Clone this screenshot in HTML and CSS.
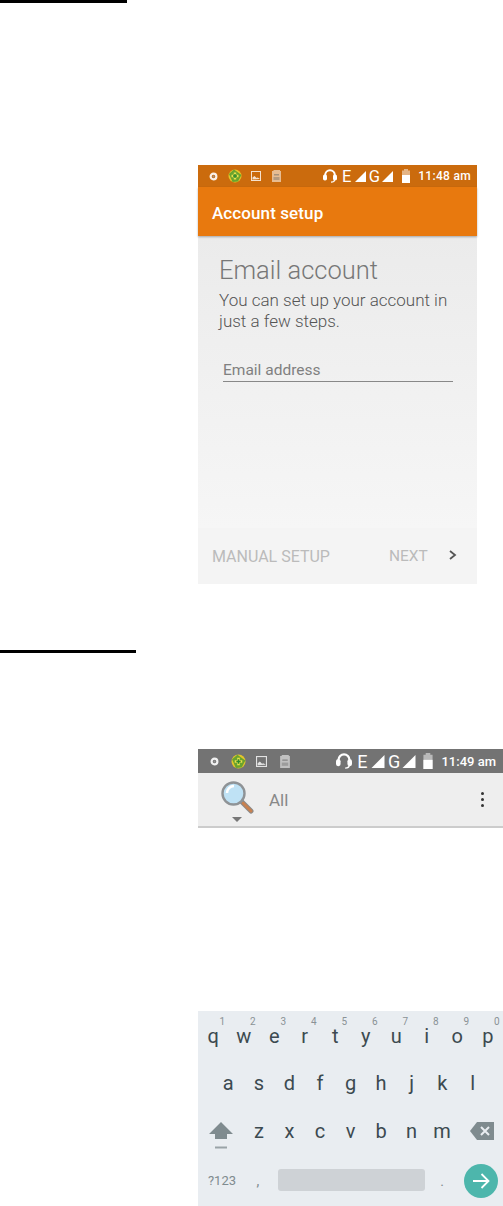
FILE: index.html
```html
<!DOCTYPE html>
<html lang="en">
<head>
  <meta charset="UTF-8"><title>Email setup</title>
  <meta name="viewport" content="width=device-width,initial-scale=1">
  <link rel="stylesheet" href="styles.css">
</head>
<body>

  <!-- shared status bar icons -->
  <svg class="defs" width="0" height="0">
    <symbol id="i-dot" viewBox="0 0 10 10"><circle cx="5" cy="5" r="3.2" fill="none" stroke="#fff" stroke-width="2.4" opacity=".9"/><circle cx="5" cy="5" r="1" fill="#999"/></symbol>
    <symbol id="i-green" viewBox="0 0 14 14"><circle cx="7" cy="7" r="6.5" fill="#e3c62a"/><path d="M1 5 6 .6 13.400 6 10 12.500 4.500 13z" fill="#6aa32e"/><path d="M7 3.500v7M3.500 7h7" stroke="#e8e04a" stroke-width="2.400"/><path d="M7 5v4M5 7h4" stroke="#2f8a2c" stroke-width="1.400"/></symbol>
    <symbol id="i-image" viewBox="0 0 10 10"><rect x=".5" y=".5" width="9" height="9" fill="none" stroke="#fff" stroke-opacity=".8"/><path d="M1.500 8.500V6.500L3.500 5l2 2 1-.5 2 1v.5z" fill="#fff" opacity=".8"/></symbol>
    <symbol id="i-sd" viewBox="0 0 9 12"><path d="M0 1h1.500V0H8v1h1v11H0z" fill="#fff" opacity=".55"/><rect x="2" y="4" width="5" height="1.500" fill="#666" opacity=".5"/><rect x="1.500" y="7" width="6" height="3" fill="#666" opacity=".4"/></symbol>
    <symbol id="i-head" viewBox="0 0 14 14"><path d="M2.200 8V6a4.800 4.800 0 0 1 9.600 0V8" fill="none" stroke="#fff" stroke-width="2"/><rect x="0" y="5.500" width="4" height="6" rx="1.800" fill="#fff"/><rect x="10" y="5.500" width="4" height="6" rx="1.800" fill="#fff"/><path d="M11.500 11c0 1.500-1.500 2.200-3.500 2.200" fill="none" stroke="#fff" stroke-width="1.200"/></symbol>
    <symbol id="i-signal" viewBox="0 0 12 12"><path d="M12 0V12H0z" fill="#fff"/></symbol>
    <symbol id="i-batt" viewBox="0 0 8 14"><path d="M2 0h4v1.500h2V14H0V1.500h2z" fill="#fff" opacity=".5"/><rect y="6" width="8" height="8" fill="#fff"/></symbol>
  </svg>

  <div class="rule rule-first"></div>

  <!-- Account setup -->
  <section class="phone phone-setup">
    <div class="status">
      <div class="status-left">
        <span class="slot"><svg class="ic-dot"><use href="#i-dot"/></svg></span>
        <span class="slot"><svg class="ic-green"><use href="#i-green"/></svg></span>
        <span class="slot"><svg class="ic-image"><use href="#i-image"/></svg></span>
        <span class="slot"><svg class="ic-sd"><use href="#i-sd"/></svg></span>
      </div>
      <div class="status-right">
        <svg class="ic-head"><use href="#i-head"/></svg>
        <span class="net">E</span>
        <svg class="ic-signal"><use href="#i-signal"/></svg>
        <span class="net">G</span>
        <svg class="ic-signal"><use href="#i-signal"/></svg>
        <svg class="ic-batt"><use href="#i-batt"/></svg>
        <span class="clock">11:48 am</span>
      </div>
    </div>
    <div class="appbar">Account setup</div>
    <div class="setup-body">
      <h1>Email account</h1>
      <p>You can set up your account in just a few steps.</p>
      <div class="email-field">Email address</div>
    </div>
    <div class="setup-foot">
      <span>MANUAL SETUP</span>
      <span class="next">NEXT</span>
      <svg class="chev" width="10" height="12" viewBox="0 0 10 12"><path d="M2 2 7 6l-5 4" fill="none" stroke="#555" stroke-width="1.800"/></svg>
    </div>
  </section>

  <div class="rule rule-second"></div>

  <!-- Search -->
  <section class="phone phone-search">
    <div class="status">
      <div class="status-left">
        <span class="slot"><svg class="ic-dot"><use href="#i-dot"/></svg></span>
        <span class="slot"><svg class="ic-green"><use href="#i-green"/></svg></span>
        <span class="slot"><svg class="ic-image"><use href="#i-image"/></svg></span>
        <span class="slot"><svg class="ic-sd"><use href="#i-sd"/></svg></span>
      </div>
      <div class="status-right">
        <svg class="ic-head"><use href="#i-head"/></svg>
        <span class="net">E</span>
        <svg class="ic-signal"><use href="#i-signal"/></svg>
        <span class="net">G</span>
        <svg class="ic-signal"><use href="#i-signal"/></svg>
        <svg class="ic-batt"><use href="#i-batt"/></svg>
        <span class="clock">11:49 am</span>
      </div>
    </div>
    <div class="searchbar">
      <div class="engine">
        <svg width="34" height="34" viewBox="0 0 34 34">
          <path d="M21 21 31 31" stroke="#8a8a8a" stroke-width="5" stroke-linecap="round"/>
          <path d="M23 23 31 31" stroke="#c9814f" stroke-width="3" stroke-linecap="round"/>
          <circle cx="13.500" cy="13.500" r="11" fill="#bfe2f5" stroke="#8f9396" stroke-width="2.400"/>
          <path d="M7 13a7 7 0 0 1 7-7" fill="none" stroke="#fff" stroke-width="2.500"/>
        </svg>
        <span class="caret"></span>
      </div>
      <span class="scope">All</span>
      <span class="more"><i></i><i></i><i></i></span>
    </div>
    <div class="blank"></div>
    <div class="keyboard">
      <div class="row row-top">
        <span class="key"><sup>1</sup>q</span><span class="key"><sup>2</sup>w</span><span class="key"><sup>3</sup>e</span><span class="key"><sup>4</sup>r</span><span class="key"><sup>5</sup>t</span><span class="key"><sup>6</sup>y</span><span class="key"><sup>7</sup>u</span><span class="key"><sup>8</sup>i</span><span class="key"><sup>9</sup>o</span><span class="key"><sup>0</sup>p</span>
      </div>
      <div class="row row-mid">
        <span class="key">a</span><span class="key">s</span><span class="key">d</span><span class="key">f</span><span class="key">g</span><span class="key">h</span><span class="key">j</span><span class="key">k</span><span class="key">l</span>
      </div>
      <div class="row row-low">
        <span class="key key-wide">
          <svg class="shift" width="24" height="27" viewBox="0 0 24 27"><path d="M12 0 24 12H18V17H6V12H0z" fill="#7f8b8f"/><rect x="6" y="24.500" width="12" height="2" fill="#9aa3a7"/></svg>
        </span>
        <span class="key">z</span><span class="key">x</span><span class="key">c</span><span class="key">v</span><span class="key">b</span><span class="key">n</span><span class="key">m</span>
        <span class="key key-wide">
          <svg class="bksp" width="24" height="18" viewBox="0 0 24 18"><path d="M7 0H24V18H7L0 9z" fill="#7f8b8f"/><path d="M11 5l8 8M19 5l-8 8" stroke="#e9edf1" stroke-width="2"/></svg>
        </span>
      </div>
      <div class="row row-bottom">
        <span class="sym">?123</span>
        <span class="comma">,</span>
        <span class="space"></span>
        <span class="period">.</span>
        <span class="enter">
          <svg width="18" height="18" viewBox="0 0 18 18"><path d="M1 9H16M9.500 2 16.500 9l-7 7" fill="none" stroke="#fff" stroke-width="1.800"/></svg>
        </span>
      </div>
    </div>
  </section>

</body>
</html>
```

FILE: styles.css
```css
* { margin:0; padding:0; box-sizing:border-box }
html, body { height:1206px; overflow:hidden; }
body { font-family:'Roboto',sans-serif; background:#fff; color:#333; }
.defs { position:absolute; }

.rule { background:#000; }
.rule-first { width:127px; height:3px; }
.rule-second { width:136px; height:3px; margin-top:66px; }

.phone { margin-left:198px; }
.phone-setup { width:279px; margin-top:162px; }
.phone-search { width:305px; margin-top:96px; }

/* Status bar */
.status { display:flex; justify-content:space-between; align-items:center; color:#fff; }
.status svg { display:block; }
.status-left, .status-right { display:flex; align-items:center; }
.slot { display:flex; justify-content:center; align-items:center; width:21px; }
.net { font-weight:400; text-align:center; }
.clock { font-weight:500; }

.phone-setup .status { height:22px; background:#cb6b0d; padding:0 6px 0 5px; }
.phone-setup .net { font-size:16.5px; width:11px; }
.phone-setup .clock { font-size:12px; letter-spacing:.3px; margin-left:8px; }
.phone-setup .ic-dot { width:9px; height:9px; }
.phone-setup .ic-green { width:14px; height:14px; }
.phone-setup .ic-image { width:10px; height:10px; }
.phone-setup .ic-sd { width:9px; height:12px; }
.phone-setup .ic-head { width:14px; height:14px; margin-right:4px; }
.phone-setup .ic-signal { width:13px; height:11px; margin:0 2px 0 1.5px; }
.phone-setup .ic-batt { width:8px; height:14px; margin-left:6px; }

.phone-search .status { height:24px; background:#737373; padding:0 7px 0 5px; }
.phone-search .slot { width:23.5px; }
.phone-search .net { font-size:18px; width:12px; }
.phone-search .clock { font-size:13px; margin-left:8px; }
.phone-search .ic-dot { width:9px; height:9px; }
.phone-search .ic-green { width:15px; height:15px; }
.phone-search .ic-image { width:11px; height:11px; }
.phone-search .ic-sd { width:10px; height:13px; }
.phone-search .ic-head { width:16px; height:16px; margin-right:4px; }
.phone-search .ic-signal { width:14px; height:13px; margin:0 3px 0 2.5px; }
.phone-search .ic-batt { width:10px; height:16px; margin-left:4px; }

/* Account setup */
.appbar { height:49px; background:#e8790e; color:#fff; font-size:17px; font-weight:500; letter-spacing:.1px; line-height:53px; padding-left:14px;
  box-shadow:0 1px 2px rgba(0,0,0,.3); position:relative;
}
.setup-body { height:292px; padding:18px 22px 0 21px; background:linear-gradient(#ebebeb,#f6f6f6); }
.setup-body h1 { font-size:25.5px; font-weight:300; line-height:32px; color:#777; }
.setup-body p { font-size:17px; font-weight:300; line-height:21px; margin-top:4px; color:#555; }
.email-field { margin:29px 2px 0 4px; padding-bottom:1px; font-size:15.5px; line-height:19px; color:#808080; border-bottom:1px solid #888; }
.setup-foot { height:56px; display:flex; align-items:center; padding-left:14px; background:#f4f4f4; color:#bbb; font-size:16px; }
.setup-foot .next { margin-left:59px; font-size:15.5px; }
.chev { margin-left:20px; margin-top:-2px; }

/* Search */
.searchbar { height:55px; display:flex; align-items:center; background:#eee; border-bottom:2px solid #ccc; }
.engine { align-self:flex-start; display:flex; flex-direction:column; align-items:center; margin-left:22px; padding-top:7px; width:34px; }
.caret { width:0; height:0; margin-top:3px; border:5px solid transparent; border-top-color:#777; border-bottom:0; }
.scope { margin-left:15px; font-size:17px; color:#888; }
.more { display:flex; flex-direction:column; gap:3px; margin-left:auto; margin-right:19px; }
.more i { width:3px; height:3px; border-radius:50%; background:#333; }
.blank { height:183px; background:#fff; }

/* Keyboard */
.keyboard { height:195px; background:#e9edf1; color:#3c4a50; }
.row { display:flex; height:48px; }
.key { flex:1; display:flex; justify-content:center; align-items:center; font-size:20px; position:relative; }
.key sup { position:absolute; top:3px; left:18px; right:0; text-align:center; font-size:10px; color:#8a9296; line-height:12px; }
.key-wide { flex:1.5; }
.shift { margin-top:8px; }
.bksp { margin-left:3px; }
.row-top { padding-top:2px; }
.row-bottom { height:51px; align-items:center; color:#7f8b8f; }
.row-mid { padding:0 15px; }
.sym { width:48px; text-align:center; font-size:13px; }
.comma { width:24px; margin-right:8px; text-align:center; font-size:14px; }
.space { width:147px; height:22px; background:#ced2d6; border-radius:3px; margin-top:-2px; }
.period { width:34px; text-align:center; font-size:14px; }
.enter { width:34px; height:34px; display:flex; justify-content:center; align-items:center; border-radius:50%; background:#4db6ac; margin-left:5px; }
```
